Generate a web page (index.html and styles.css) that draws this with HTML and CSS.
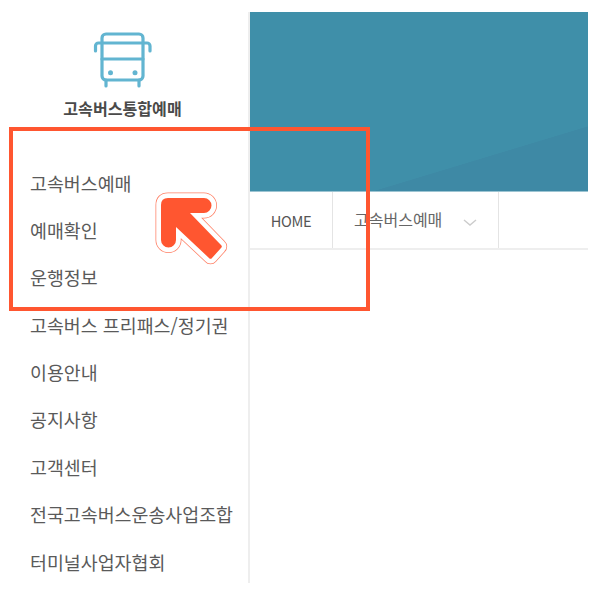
FILE: index.html
```html
<!DOCTYPE html>
<html lang="ko">
<head>
    <meta charset="UTF-8">
    <title>고속버스통합예매</title>
    <link rel="stylesheet" href="styles.css">
</head>
<body>
    <div class="page">
        <div class="side">
            <div class="logo">
                <svg class="bus" viewBox="92 31 62 58">
                    <path d="M102 43V38a4 4 0 0 1 4-4H139a4 4 0 0 1 4 4V76a4 4 0 0 1-4 4H106a4 4 0 0 1-4-4Z"/>
                    <path d="M95.5 51V46a3 3 0 0 1 3-3H147a3 3 0 0 1 3 3V51M102 59H143M106 80V86M139 80V86"/>
                    <circle class="wheel" cx="110.5" cy="72.7" r="2.5"/>
                    <circle class="wheel" cx="135" cy="72.7" r="2.5"/>
                </svg>
                <div class="logo-name">고속버스통합예매</div>
            </div>
            <ul class="menu">
                <li>고속버스예매</li>
                <li>예매확인</li>
                <li>운행정보</li>
                <li>고속버스 프리패스/정기권</li>
                <li>이용안내</li>
                <li>공지사항</li>
                <li>고객센터</li>
                <li>전국고속버스운송사업조합</li>
                <li>터미널사업자협회</li>
            </ul>
        </div>
        <div class="main">
            <div class="hero"></div>
            <div class="crumbs">
                <div class="crumb home">HOME</div>
                <div class="crumb current">
                    고속버스예매
                    <svg class="chev" viewBox="0 0 14 7"><path d="M1 1l6 5 6-5"/></svg>
                </div>
            </div>
        </div>
    </div>

    <!-- 강조 표시 -->
    <div class="mark"></div>
    <svg class="arrow" viewBox="150 188 80 80">
        <defs>
            <path id="arw" d="M168 198H204a7.5 7.5 0 0 1 0 15H190L221 245a2 2 0 0 1 0 3L212 258a2 2 0 0 1-3 0L176 227V240a7.5 7.5 0 0 1-15 0V205Q161 198 168 198Z"/>
        </defs>
        <use href="#arw" class="a-line"/>
        <use href="#arw" class="a-white"/>
        <use href="#arw" class="a-fill"/>
    </svg>
</body>
</html>
```

FILE: styles.css
```css
html,body{
    margin:0;
    padding:0;
    background:#fff;
}

body{
    width:600px;
    height:600px;
    overflow:hidden;
    position:relative;
    font-family:"Noto Sans CJK KR","Liberation Sans",sans-serif;
}

.page{
    display:flex;
    box-sizing:border-box;
    height:571px;
    margin-top:12px;
    padding-right:12px;
}

.side{
    width:250px;
    flex:none;
    box-sizing:border-box;
    border-right:2px solid #eee;
}

.logo{
    display:flex;
    flex-direction:column;
    align-items:center;
    padding-top:19px;
}

.bus{
    width:62px;
    height:58px;
    fill:none;
    stroke:#62b5d1;
    stroke-width:3.2;
    stroke-linecap:round;
    margin-right:2px;
}

.wheel{
    fill:#62b5d1;
    stroke:none;
}

.logo-name{
    margin-top:9px;
    font-size:16.1px;
    line-height:20px;
    font-weight:700;
    color:#4a4a4a;
    margin-right:3px;
}

.menu{
    list-style:none;
    margin:41.5px 0 0;
    padding:0 0 0 30px;
}

.menu li{
    height:47.4px;
    line-height:47.4px;
    font-size:18.4px;
    color:#5a5a5a;
    white-space:nowrap;
}

.main{
    flex:1;
    min-width:0;
}

.hero{
    height:180px;
    background:linear-gradient(to bottom right,transparent 50%,#3e89a5 50.5%) right bottom / 215px 65px no-repeat #3f8fa9;
    border-bottom:1px solid #9cc4d2;
    box-sizing:border-box;
}

.crumbs{
    display:flex;
    height:58px;
    box-sizing:border-box;
    border-bottom:2px solid #eee;
}

.crumb{
    display:flex;
    align-items:center;
    box-sizing:border-box;
    border-right:1px solid #e4e4e4;
    color:#666;
    white-space:nowrap;
}

.home{
    width:83px;
    justify-content:center;
    font-size:14.6px;
    color:#555;
    letter-spacing:-.4px;
}

.current{
    width:166px;
    padding-left:21px;
    font-size:16px;
    padding-bottom:3px;
}

.chev{
    width:14px;
    height:7px;
    margin-left:21px;
    margin-top:7px;
    fill:none;
    stroke:#ccc;
    stroke-width:1.4;
}

/* 빨간 박스, 화살표는 내용 위에 겹쳐 올림 */
.mark{
    position:absolute;
    left:9px;
    top:127px;
    width:361px;
    height:184px;
    box-sizing:border-box;
    border:4px solid #ff5630;
}

.arrow{
    position:absolute;
    left:150px;
    top:188px;
    width:80px;
    height:80px;
}

.a-line{
    fill:#ff8066;
    stroke:#ff8066;
    stroke-width:11;
    stroke-linejoin:round;
}

.a-white{
    fill:#fff;
    stroke:#fff;
    stroke-width:9.5;
    stroke-linejoin:round;
}

.a-fill{
    fill:#ff5630;
}
```
